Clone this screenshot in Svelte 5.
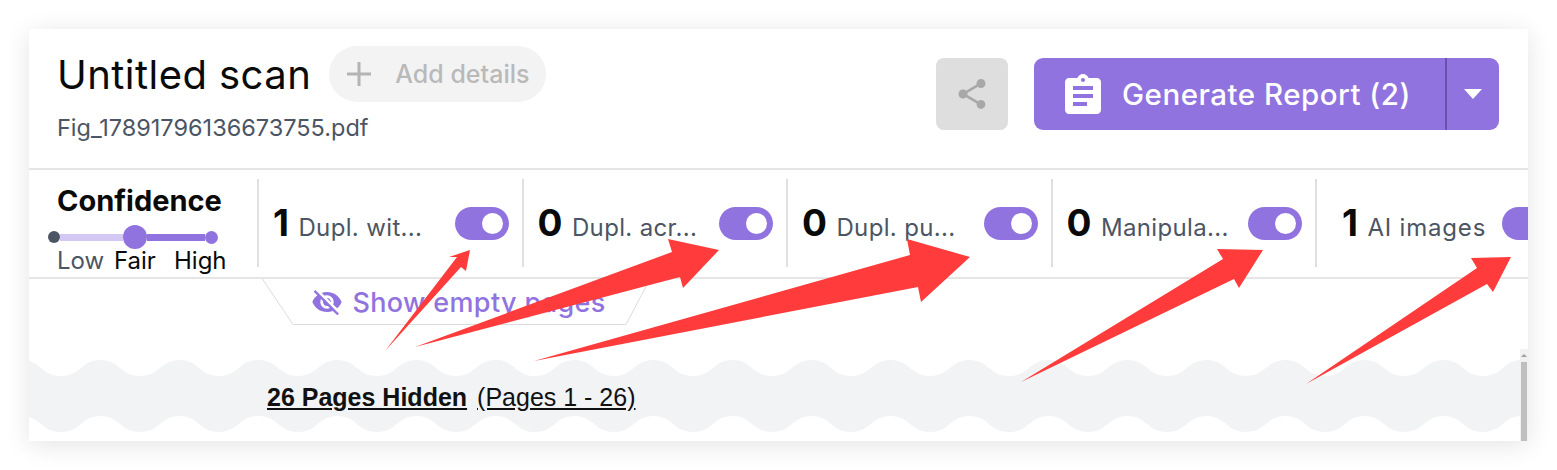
<script>
  const filters = [
    { n: 1, label: 'Dupl. wit...' },
    { n: 0, label: 'Dupl. acr...' },
    { n: 0, label: 'Dupl. pu...' },
    { n: 0, label: 'Manipula...' },
    { n: 1, label: 'AI images', last: true }
  ];
  const arrows = [
    '385,351 457,257 449,257 470,250 466,271 461,267',
    '415,347 672,252 668,239 719,250 683,288 680,277',
    '534,361 910,255 907,239 970,257 921,302 918,287',
    '1021,382 1223,259 1217,249 1263,250 1239,288 1234,279',
    '1306,384 1477,268 1471,258 1511,257 1493,292 1487,284'
  ];
  const P = 79;
  function edge(y, count) {
    let d = '';
    for (let i = 0; i < count; i++) {
      const x = -47 + i * P;
      d += `C${x + 20} ${y + 16} ${x + 20} ${y} ${x + 39.5} ${y} C${x + 59} ${y} ${x + 59} ${y + 16} ${x + 79} ${y + 16} `;
    }
    return d;
  }
  const n = 21;
  const end = -47 + n * P;
  const wave = `M-47 16 ${edge(0, n)} L${end} 72 `;
  let back = '';
  for (let i = n - 1; i >= 0; i--) {
    const x = -47 + i * P;
    back += `C${x + 59} 72 ${x + 59} 56 ${x + 39.5} 56 C${x + 20} 56 ${x + 20} 72 ${x} 72 `;
  }
  const wavePath = wave + back + 'Z';
</script>

<div class="page">
  <div class="card">
    <header class="head">
      <div class="info">
        <div class="title-row">
          <h1>Untitled scan</h1>
          <div class="add">
            <svg viewBox="0 0 24 24" width="24" height="24"><path d="M12 0V24M0 12H24" stroke="#b4b4b4" stroke-width="3"/></svg>
            <span>Add details</span>
          </div>
        </div>
        <div class="file">Fig_17891796136673755.pdf</div>
      </div>
      <div class="actions">
        <div class="share">
          <svg viewBox="0 0 24 24" width="36" height="36"><path fill="#a8a8a8" d="M18 16.08c-.76 0-1.44.3-1.96.77L8.91 12.7c.05-.23.09-.46.09-.7s-.04-.47-.09-.7l7.05-4.11c.54.5 1.25.81 2.04.81 1.66 0 3-1.34 3-3s-1.34-3-3-3-3 1.34-3 3c0 .24.04.47.09.7L8.04 9.81C7.5 9.31 6.79 9 6 9c-1.66 0-3 1.34-3 3s1.34 3 3 3c.79 0 1.5-.31 2.04-.81l7.12 4.16c-.05.21-.08.43-.08.65 0 1.61 1.31 2.92 2.92 2.92 1.61 0 2.92-1.31 2.92-2.92s-1.31-2.92-2.92-2.92z"/></svg>
        </div>
        <div class="report">
          <div class="report-main">
            <svg viewBox="3 1 18 20" width="36" height="40"><path fill="#fff" d="M19 3h-4.18C14.4 1.84 13.3 1 12 1c-1.3 0-2.4.84-2.82 2H5c-1.1 0-2 .9-2 2v14c0 1.1.9 2 2 2h14c1.1 0 2-.9 2-2V5c0-1.1-.9-2-2-2zm-7 0c.55 0 1 .45 1 1s-.45 1-1 1-1-.45-1-1 .45-1 1-1zm2 14H7v-2h7v2zm3-4H7v-2h10v2zm0-4H7V7h10v2z"/></svg>
            <span>Generate Report (2)</span>
          </div>
          <div class="report-caret"><i></i></div>
        </div>
      </div>
    </header>

    <section class="filters">
      <div class="confidence">
        <div class="conf-title">Confidence</div>
        <div class="slider">
          <i class="dot low"></i><i class="seg light"></i><i class="dot knob"></i><i class="seg strong"></i><i class="dot high"></i>
        </div>
        <div class="levels"><span class="muted">Low</span><span>Fair</span><span>High</span></div>
      </div>
      {#each filters as f}
        <div class="filter" class:last={f.last}>
          <span class="count">{f.n}</span>
          <span class="label">{f.label}</span>
          <span class="toggle"><i></i></span>
        </div>
      {/each}
    </section>

    <section class="body">
      <div class="tab">
        <svg class="tab-shape" viewBox="0 0 388 46" width="388" height="46"><path d="M0.5 0 L31 45.5 H364 L388 0" fill="#fff" stroke="#dcdcdc"/></svg>
        <span class="tab-text">
          <svg viewBox="0 0 24 24" width="32" height="32"><path fill="#9173e0" d="M12 7c2.76 0 5 2.24 5 5 0 .65-.13 1.26-.36 1.83l2.92 2.92c1.51-1.26 2.7-2.89 3.43-4.75-1.73-4.39-6-7.5-11-7.5-1.4 0-2.74.25-3.98.7l2.16 2.16C10.74 7.13 11.35 7 12 7zM2 4.27l2.28 2.28.46.46C3.08 8.3 1.78 10.02 1 12c1.73 4.39 6 7.5 11 7.5 1.55 0 3.03-.3 4.38-.84l.42.42L19.73 22 21 20.73 3.27 3 2 4.27zM7.53 9.8l1.55 1.55c-.05.21-.08.43-.08.65 0 1.66 1.34 3 3 3 .22 0 .44-.03.65-.08l1.55 1.55c-.67.33-1.41.53-2.2.53-2.76 0-5-2.24-5-5 0-.79.2-1.53.53-2.2zm4.31-.78l3.15 3.15.02-.16c0-1.66-1.34-3-3-3l-.17.01z"/></svg>
          Show empty pages
        </span>
      </div>
      <div class="band">
        <svg class="wave" width="1492" height="72" viewBox="0 0 1492 72"><path d={wavePath} fill="#f2f3f5"/></svg>
        <div class="band-text"><b>26 Pages Hidden</b><span>(Pages 1 - 26)</span></div>
      </div>
      <div class="scrollbar"><i class="up"></i><i class="thumb"></i></div>
    </section>
  </div>

  <svg class="arrows" width="1557" height="470" viewBox="0 0 1557 470">
    {#each arrows as a}<polygon points={a} fill="#ff3b3b"/>{/each}
  </svg>
</div>

<style>
  :global(body) { margin: 0; background: #fff; }
  .page {
    position: relative;
    width: 1557px;
    height: 470px;
    padding: 29px 29px 0;
    box-sizing: border-box;
    overflow: hidden;
    font-family: Inter, "Liberation Sans", sans-serif;
  }
  .card {
    width: 1499px;
    height: 412px;
    background: #fff;
    box-shadow: 0 4px 24px rgba(0, 0, 0, 0.11);
    display: flex;
    flex-direction: column;
    overflow: hidden;
  }
  .head {
    height: 141px;
    flex: none;
    box-sizing: border-box;
    border-bottom: 2px solid #e5e5e5;
    display: flex;
    justify-content: space-between;
    padding: 17px 29px 0 28px;
  }
  .title-row { display: flex; align-items: center; gap: 18px; }
  h1 { margin: 0; font-size: 40px; font-weight: 400; color: #0a0a0a; line-height: 58px; letter-spacing: 0.45px; }
  .add {
    width: 217px;
    height: 56px;
    box-sizing: border-box;
    border-radius: 28px;
    background: #f3f3f3;
    color: #b9b9b9;
    font-size: 25px;
    font-weight: 500;
    display: flex;
    align-items: center;
    padding-left: 18px;
    gap: 24px;
    margin-top: -2px;
  }
  .file { margin-top: 8px; font-size: 23.5px; color: #4b5563; line-height: 32px; }
  .actions { display: flex; gap: 26px; margin-top: 12px; }
  .share {
    width: 72px;
    height: 72px;
    background: #dedede;
    border-radius: 8px;
    display: flex;
    align-items: center;
    justify-content: center;
  }
  .report {
    width: 465px;
    height: 72px;
    background: #9173e0;
    border-radius: 9px;
    display: flex;
    color: #fff;
  }
  .report-main {
    width: 413px;
    box-sizing: border-box;
    display: flex;
    align-items: center;
    gap: 21px;
    padding-left: 31px;
    font-size: 29.5px;
    letter-spacing: 0.5px;
    font-weight: 500;
    border-right: 2px solid #6a50b0;
  }
  .report-caret { flex: 1; display: flex; align-items: center; justify-content: center; }
  .report-caret i {
    border-left: 9.5px solid transparent;
    border-right: 9.5px solid transparent;
    border-top: 10px solid #fff;
  }
  .filters {
    height: 109px;
    flex: none;
    box-sizing: border-box;
    border-bottom: 2px solid #e5e5e5;
    padding-top: 9px;
    display: flex;
    overflow: hidden;
  }
  .confidence {
    width: 228px;
    flex: none;
    height: 88px;
    box-sizing: border-box;
    padding-left: 28px;
  }
  .conf-title { font-size: 29px; font-weight: 700; color: #0a0a0a; line-height: 44px; }
  .slider { display: flex; align-items: center; margin: 2px 0 0 -9px; width: 170px; height: 24px; }
  .dot { display: block; border-radius: 50%; flex: none; }
  .low { width: 12px; height: 12px; background: #4b5563; }
  .knob { width: 24px; height: 24px; background: #9173e0; }
  .high { width: 13px; height: 13px; background: #9173e0; }
  .seg { display: block; height: 7px; }
  .light { width: 63px; background: #d3c7f3; }
  .strong { width: 58px; background: #9173e0; }
  .levels { display: flex; font-size: 24px; color: #0a0a0a; line-height: 28px; margin-top: -2px; }
  .levels span:nth-child(1) { width: 57px; }
  .levels span:nth-child(2) { width: 60px; }
  .muted { color: #4b5563; }
  .filter {
    width: 264.5px;
    flex: none;
    height: 88px;
    box-sizing: border-box;
    border-left: 2px solid #e0e0e0;
    padding: 0 13px 0 14px;
    display: flex;
    align-items: center;
  }
  .filter.last { padding-left: 25px; }
  .count { font-size: 37px; font-weight: 700; color: #0a0a0a; margin-right: 9.5px; margin-top: -1px; flex: none; }
  .label { font-size: 24px; color: #4b5563; margin-top: 8px; white-space: nowrap; flex: 1; letter-spacing: 0.35px; }
  .filter.last .label { flex: none; margin-right: 16px; letter-spacing: 0.8px; }
  .toggle {
    width: 54px;
    height: 33px;
    flex: none;
    border-radius: 17px;
    background: #9173e0;
    display: flex;
    align-items: center;
    justify-content: flex-end;
    padding-right: 6px;
    box-sizing: border-box;
  }
  .toggle i { width: 21px; height: 21px; border-radius: 50%; background: #fff; display: block; }
  .body { flex: 1; position: relative; display: flex; flex-direction: column; }
  .tab {
    width: 388px;
    height: 46px;
    margin-left: 233px;
    position: relative;
    display: flex;
    align-items: center;
    justify-content: center;
    flex: none;
  }
  .tab-shape { position: absolute; inset: 0; }
  .tab-text {
    position: relative;
    display: flex;
    align-items: center;
    gap: 9px;
    color: #9173e0;
    font: 500 27px Inter, sans-serif;
    letter-spacing: 0.35px;
    margin-left: 5px;
    white-space: nowrap;
  }
  .band { position: relative; width: 1492px; height: 72px; margin-top: 35px; flex: none; }
  .wave { display: block; position: absolute; inset: 0; }
  .band-text {
    position: absolute;
    left: 238px;
    top: 23px;
    display: flex;
    gap: 10px;
    font-family: "Liberation Sans", sans-serif;
    font-size: 25px;
    color: #111;
    text-decoration: underline;
  }
  .scrollbar {
    position: absolute;
    right: 0;
    top: 70px;
    width: 8px;
    bottom: 0;
    background: #f1f1f1;
    display: flex;
    flex-direction: column;
    align-items: center;
  }
  .up {
    margin-top: 5px;
    border-left: 3px solid transparent;
    border-right: 3px solid transparent;
    border-bottom: 3px solid #a0a0a0;
  }
  .thumb { display: block; width: 6px; flex: 1; margin-top: 5px; background: #bfbfbf; }
  .arrows { position: absolute; left: 0; top: 0; pointer-events: none; }
</style>
